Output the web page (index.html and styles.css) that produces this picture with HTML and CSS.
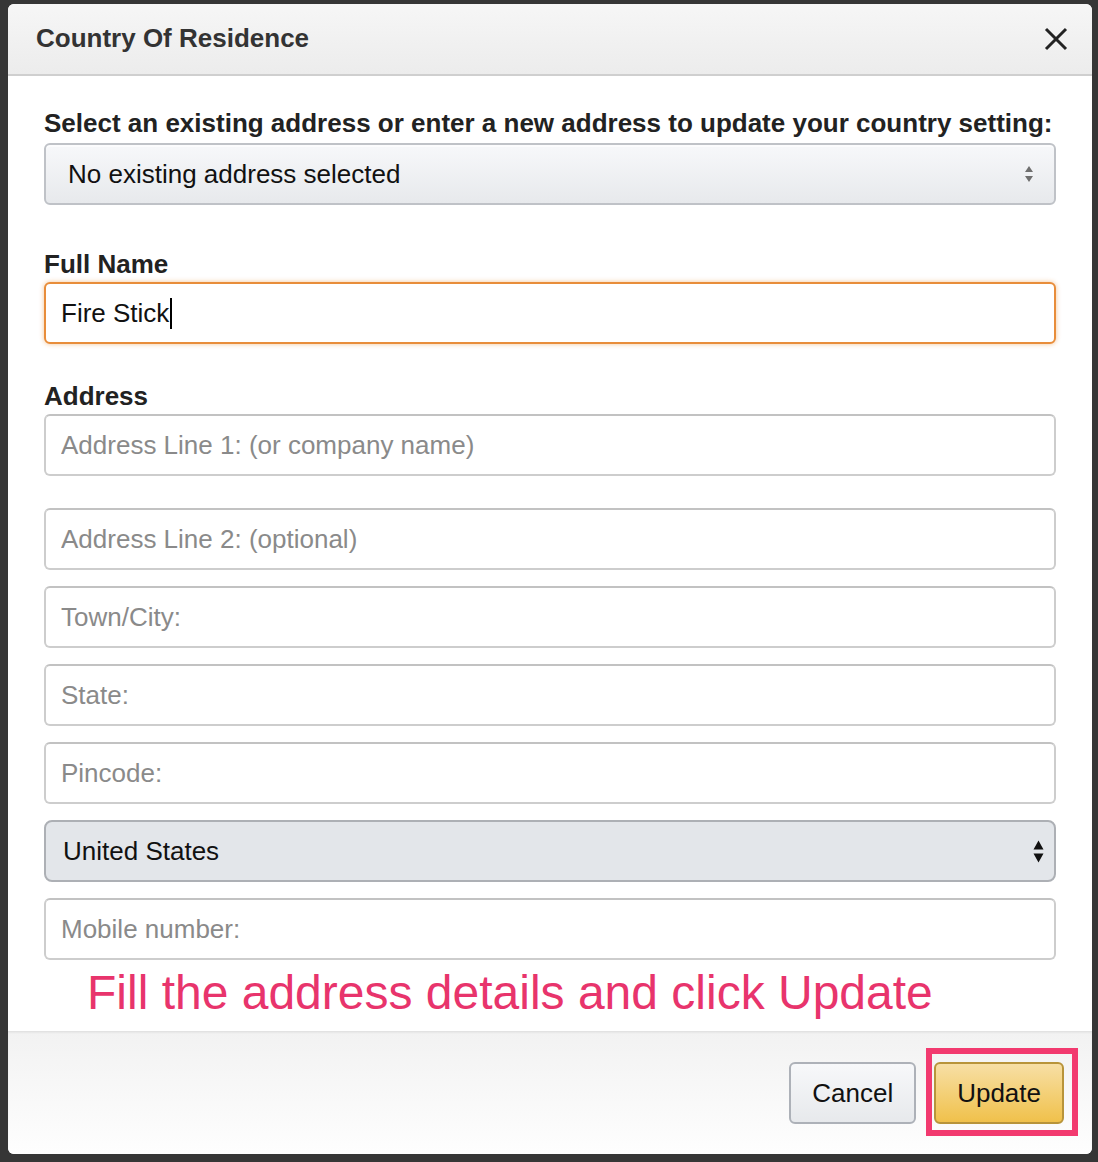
FILE: index.html
```html
<!DOCTYPE html>
<html lang="en">
<head>
	<meta charset="UTF-8">
	<title>Country Of Residence</title>
	<link rel="stylesheet" href="styles.css">
</head>
<body>
	<div class="modal">
		<div class="modal-header">
			<h4 class="modal-title">Country Of Residence</h4>
			<button class="close" type="button">
				<svg width="24" height="24" viewBox="0 0 24 24"><path d="M2 2L22 22M22 2L2 22" stroke="#222" stroke-width="3" fill="none"/></svg>
			</button>
		</div>
		<div class="modal-body">
			<label class="field-label top">Select an existing address or enter a new address to update your country setting:</label>
			<div class="dropdown">
				<span>No existing address selected</span>
				<svg width="10" height="18" viewBox="0 0 10 18"><path d="M1 7L5 1L9 7Z M1 11L5 17L9 11Z" fill="#6f6f6f"/></svg>
			</div>

			<label class="field-label name">Full Name</label>
			<div class="text-field focused">Fire Stick<span class="caret"></span></div>

			<label class="field-label address">Address</label>
			<input class="text-field" type="text" placeholder="Address Line 1: (or company name)">
			<input class="text-field line2" type="text" placeholder="Address Line 2: (optional)">
			<input class="text-field" type="text" placeholder="Town/City:">
			<input class="text-field" type="text" placeholder="State:">
			<input class="text-field" type="text" placeholder="Pincode:">
			<div class="country-select">
				<span>United States</span>
				<svg width="11" height="24" viewBox="0 0 11 24"><path d="M0.5 9.5L5.5 0.5L10.5 9.5Z M0.5 13.5L5.5 22.5L10.5 13.5Z" fill="#111"/></svg>
			</div>
			<input class="text-field" type="text" placeholder="Mobile number:">

			<p class="note">Fill the address details and click Update</p>
		</div>
		<div class="modal-footer">
			<button class="btn" type="button">Cancel</button>
			<span class="highlight"><button class="btn btn-primary" type="button">Update</button></span>
		</div>
	</div>
</body>
</html>
```

FILE: styles.css
```css
* {
	margin: 0;
	padding: 0;
	box-sizing: border-box;
	font-family: "Liberation Sans", Arial, sans-serif;
}
body {
	background: #363636;
	padding: 4px 6px 8px 8px;
}
.modal {
	background: #fff;
	border-radius: 6px;
	overflow: hidden;
	height: 1150px;
	display: flex;
	flex-direction: column;
}

/* header */
.modal-header {
	height: 72px;
	display: flex;
	align-items: center;
	justify-content: space-between;
	padding: 0 24px 0 28px;
	background: linear-gradient(to bottom, #f6f6f6, #ececec);
	border-bottom: 2px solid #cfcfcf;
}
.modal-title {
	font-size: 26px;
	font-weight: bold;
	color: #333;
	padding-bottom: 2px;
}
.close {
	border: 0;
	background: none;
	width: 24px;
	height: 24px;
	display: flex;
}

/* body */
.modal-body {
	flex: 1;
	padding: 31px 36px 10px 36px;
}
.field-label {
	display: block;
	font-size: 26px;
	line-height: 32px;
	font-weight: bold;
	color: #222;
	margin-bottom: 2px;
}
.field-label.top {
	margin-bottom: 4px;
}
.field-label.name {
	margin-top: 43px;
}
.field-label.address {
	margin-top: 36px;
	margin-bottom: 2px;
}
.dropdown {
	height: 62px;
	display: flex;
	align-items: center;
	justify-content: space-between;
	padding: 0 20px 0 22px;
	border: 2px solid #bfc2c7;
	border-radius: 6px;
	background: linear-gradient(to bottom, #f7f8fa, #e7e9ec);
	box-shadow: inset 0 2px 0 rgba(255,255,255,.6);
	font-size: 26px;
	color: #111;
}
.text-field {
	display: block;
	width: 100%;
	height: 62px;
	padding: 0 15px;
	border: 2px solid #cdcdcd;
	border-top-color: #c2c2c2;
	border-radius: 6px;
	background: #fff;
	font-size: 26px;
	color: #111;
	outline: none;
	margin-bottom: 16px;
}
.text-field::placeholder {
	color: #8a8a8a;
}
.text-field.line2 {
	margin-top: 32px;
}
.text-field.focused {
	display: flex;
	align-items: center;
	margin-bottom: 0;
	border-color: #e88d3a;
	box-shadow: 0 0 5px rgba(228,121,17,.45);
}
.caret {
	display: inline-block;
	width: 2px;
	height: 31px;
	background: #000;
	margin-left: 1px;
}
.country-select {
	height: 62px;
	display: flex;
	align-items: center;
	justify-content: space-between;
	padding: 0 10px 0 17px;
	border: 2px solid #adb0b5;
	border-radius: 8px;
	background: #e3e6ea;
	font-size: 26px;
	color: #111;
	margin-bottom: 16px;
}
.country-select svg {
	margin-top: 2px;
}
.note {
	margin-top: -11px;
	padding-left: 43px;
	font-size: 48px;
	line-height: 56px;
	color: #e8346c;
}

/* footer */
.modal-footer {
	height: 123px;
	display: flex;
	align-items: center;
	justify-content: flex-end;
	gap: 18px;
	padding: 0 28px 0 0;
	background: linear-gradient(to bottom, #f2f2f2, #fefefe);
	border-top: 1px solid #e2e2e2;
	box-shadow: inset 0 1px 2px rgba(0,0,0,.05);
}
.btn {
	height: 62px;
	padding: 0 21px;
	border: 2px solid #adb1b8;
	border-radius: 6px;
	background: linear-gradient(to bottom, #f7f8fa, #e7e9ec);
	font-size: 26px;
	color: #111;
}
.btn-primary {
	padding: 0 21px;
	border-color: #b8943a;
	background: linear-gradient(to bottom, #f7dfa5, #f0c14b);
}
.highlight {
	position: relative;
	display: flex;
}
.highlight::after {
	content: "";
	position: absolute;
	top: -14px;
	left: -8px;
	right: -14px;
	bottom: -12px;
	border: 6px solid #f23a6f;
}
```
